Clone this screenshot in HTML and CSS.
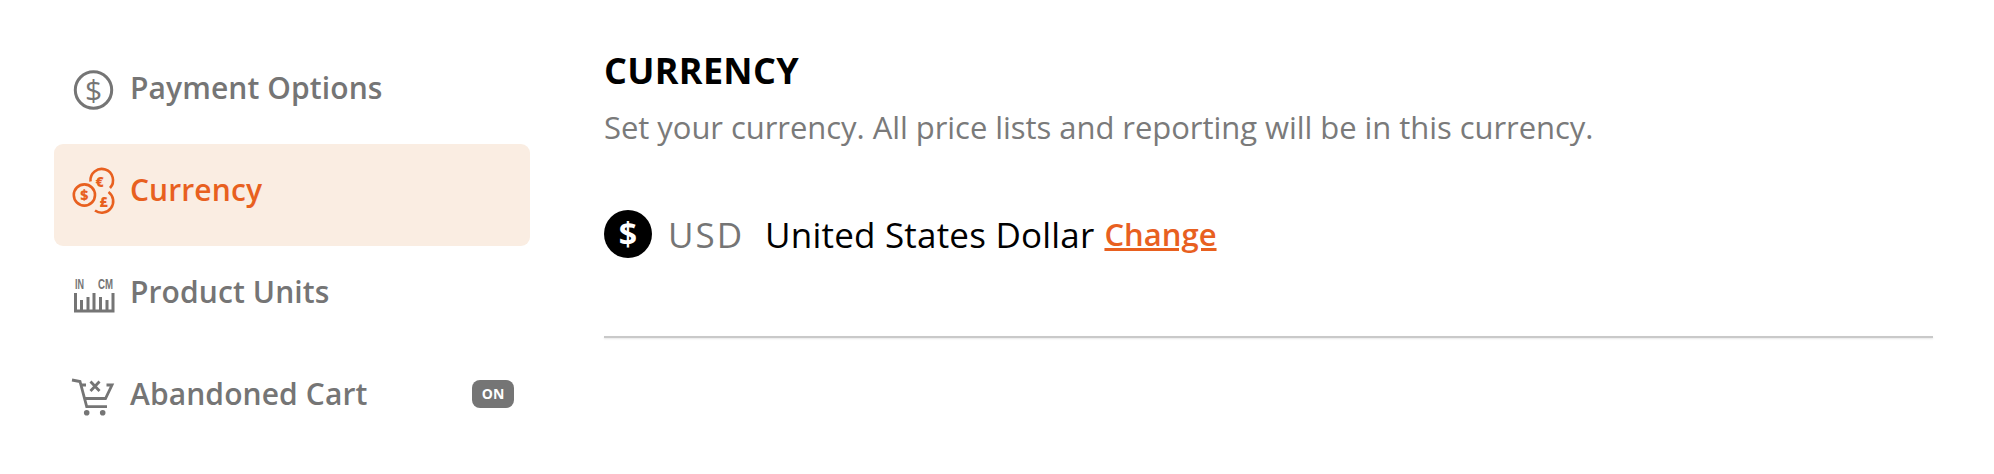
FILE: index.html
```html
<!DOCTYPE html>
<html lang="en">
<head>
    <meta charset="UTF-8">
    <meta name="viewport" content="width=device-width, initial-scale=1.0">
    <title>Settings</title>
    <link rel="stylesheet" href="styles.css">
</head>
<body>
    <div class="page">
        <nav class="sidebar">
            <a class="nav-item">
                <svg class="nav-icon" viewBox="0 0 44 44">
                    <circle cx="21.5" cy="24" r="18.2" fill="none" stroke="currentColor" stroke-width="3"/>
                    <text x="21.5" y="34.5" class="coin-big">$</text>
                </svg>
                <span class="nav-label">Payment Options</span>
            </a>
            <a class="nav-item active">
                <svg class="nav-icon" viewBox="0 0 44 44">
                    <g fill="none" stroke="currentColor" stroke-width="2.6">
                        <circle cx="12.4" cy="27" r="10.6"/>
                        <path d="M18.5 13.5A11.3 11.3 0 1 1 38 20"/>
                        <path d="M36.5 24A10.8 10.8 0 1 1 23 42.5"/>
                    </g>
                    <text x="12.4" y="32" class="coin">$</text>
                    <text x="27.5" y="19" class="coin">€</text>
                    <text x="31.5" y="39" class="coin">£</text>
                </svg>
                <span class="nav-label">Currency</span>
            </a>
            <a class="nav-item">
                <svg class="nav-icon" viewBox="0 0 44 44">
                    <text x="3" y="19" class="unit" textLength="9" lengthAdjust="spacingAndGlyphs">IN</text>
                    <text x="26" y="19" class="unit" textLength="15" lengthAdjust="spacingAndGlyphs">CM</text>
                    <path d="M3.5 23V41H41V23M9.5 30V41M16 27V41M22 23V41M28.5 27V41M35 30V41" fill="none" stroke="currentColor" stroke-width="3"/>
                </svg>
                <span class="nav-label">Product Units</span>
            </a>
            <a class="nav-item">
                <svg class="nav-icon" viewBox="0 0 44 44">
                    <g fill="none" stroke="currentColor" stroke-width="2.8">
                        <path d="M0 8L8 9.5L14.7 34.7H35"/>
                        <path d="M10 13H14M34.5 13H40L33.5 26.5H12"/>
                        <path d="M18.5 9.5L27.5 19M27.5 9.5L18.5 19"/>
                    </g>
                    <circle cx="14.7" cy="40.7" r="2.8" fill="currentColor"/>
                    <circle cx="30.7" cy="40.7" r="2.8" fill="currentColor"/>
                </svg>
                <span class="nav-label">Abandoned Cart</span>
                <span class="badge">ON</span>
            </a>
        </nav>
        <main class="content">
            <h1 class="title">CURRENCY</h1>
            <p class="subtitle">Set your currency. All price lists and reporting will be in this currency.</p>
            <div class="currency-row">
                <span class="currency-icon">$</span>
                <span class="currency-code">USD</span>
                <span class="currency-name">United States Dollar</span>
                <a class="change-link">Change</a>
            </div>
            <hr class="divider">
        </main>
    </div>
</body>
</html>
```

FILE: styles.css
```css
body {
    margin: 0;
    background-color: #fff;
    font-family: "Open Sans", "Noto Sans", sans-serif;
    color: #757575;
}
.page {
    display: flex;
    width: 1994px;
    height: 474px;
    overflow: hidden;
}
.sidebar {
    width: 476px;
    margin-left: 54px;
    padding-top: 42px;
}
.nav-item {
    display: flex;
    align-items: center;
    height: 102px;
    padding: 0 16px 10px 18px;
    box-sizing: border-box;
    border-radius: 9px;
    color: #757575;
}
.nav-item.active {
    background-color: #faede2;
    color: #e8601f;
}
.nav-icon {
    width: 44px;
    height: 44px;
    margin-right: 14px;
    overflow: visible;
    flex-shrink: 0;
}
.nav-icon text {
    fill: currentColor;
    text-anchor: middle;
}
.nav-icon .unit {
    font-family: "Liberation Sans", sans-serif;
    font-size: 15px;
    font-weight: 700;
    text-anchor: start;
}
.coin-big {
    font-size: 30px;
}
.coin {
    font-size: 14px;
    font-weight: 800;
}
.nav-label {
    padding-bottom: 2px;
    font-size: 30px;
    font-weight: 600;
    letter-spacing: 0.1px;
    flex-grow: 1;
}
.badge {
    width: 42px;
    height: 28px;
    line-height: 28px;
    border-radius: 8px;
    background-color: #757575;
    color: #fff;
    font-size: 14px;
    font-weight: 700;
    text-align: center;
}
.content {
    width: 1329px;
    margin-left: 74px;
    padding-top: 50px;
}
.title {
    margin: 0;
    font-size: 36px;
    line-height: 42px;
    font-weight: 700;
    letter-spacing: 0.3px;
    color: #000;
}
.subtitle {
    margin: 14px 0 0;
    font-size: 31px;
    line-height: 42px;
    letter-spacing: -0.05px;
    color: #7a7a7a;
}
.currency-row {
    display: flex;
    align-items: center;
    margin-top: 62px;
    font-size: 35px;
}
.currency-icon {
    width: 48px;
    height: 48px;
    margin-right: 16px;
    border-radius: 50%;
    background-color: #000;
    color: #fff;
    font-size: 32px;
    font-weight: 700;
    line-height: 48px;
    text-align: center;
}
.currency-code {
    margin-right: 21px;
    letter-spacing: 2px;
}
.currency-name {
    margin-right: 10px;
    letter-spacing: 0.2px;
    color: #000;
}
.change-link {
    color: #e8601f;
    font-size: 31px;
    font-weight: 600;
    text-decoration: underline;
}
.divider {
    margin: 78px 0 0;
    height: 2px;
    border: none;
    background-color: #c9c9c9;
    box-shadow: 0 1px 2px rgba(0, 0, 0, 0.1);
}
```
